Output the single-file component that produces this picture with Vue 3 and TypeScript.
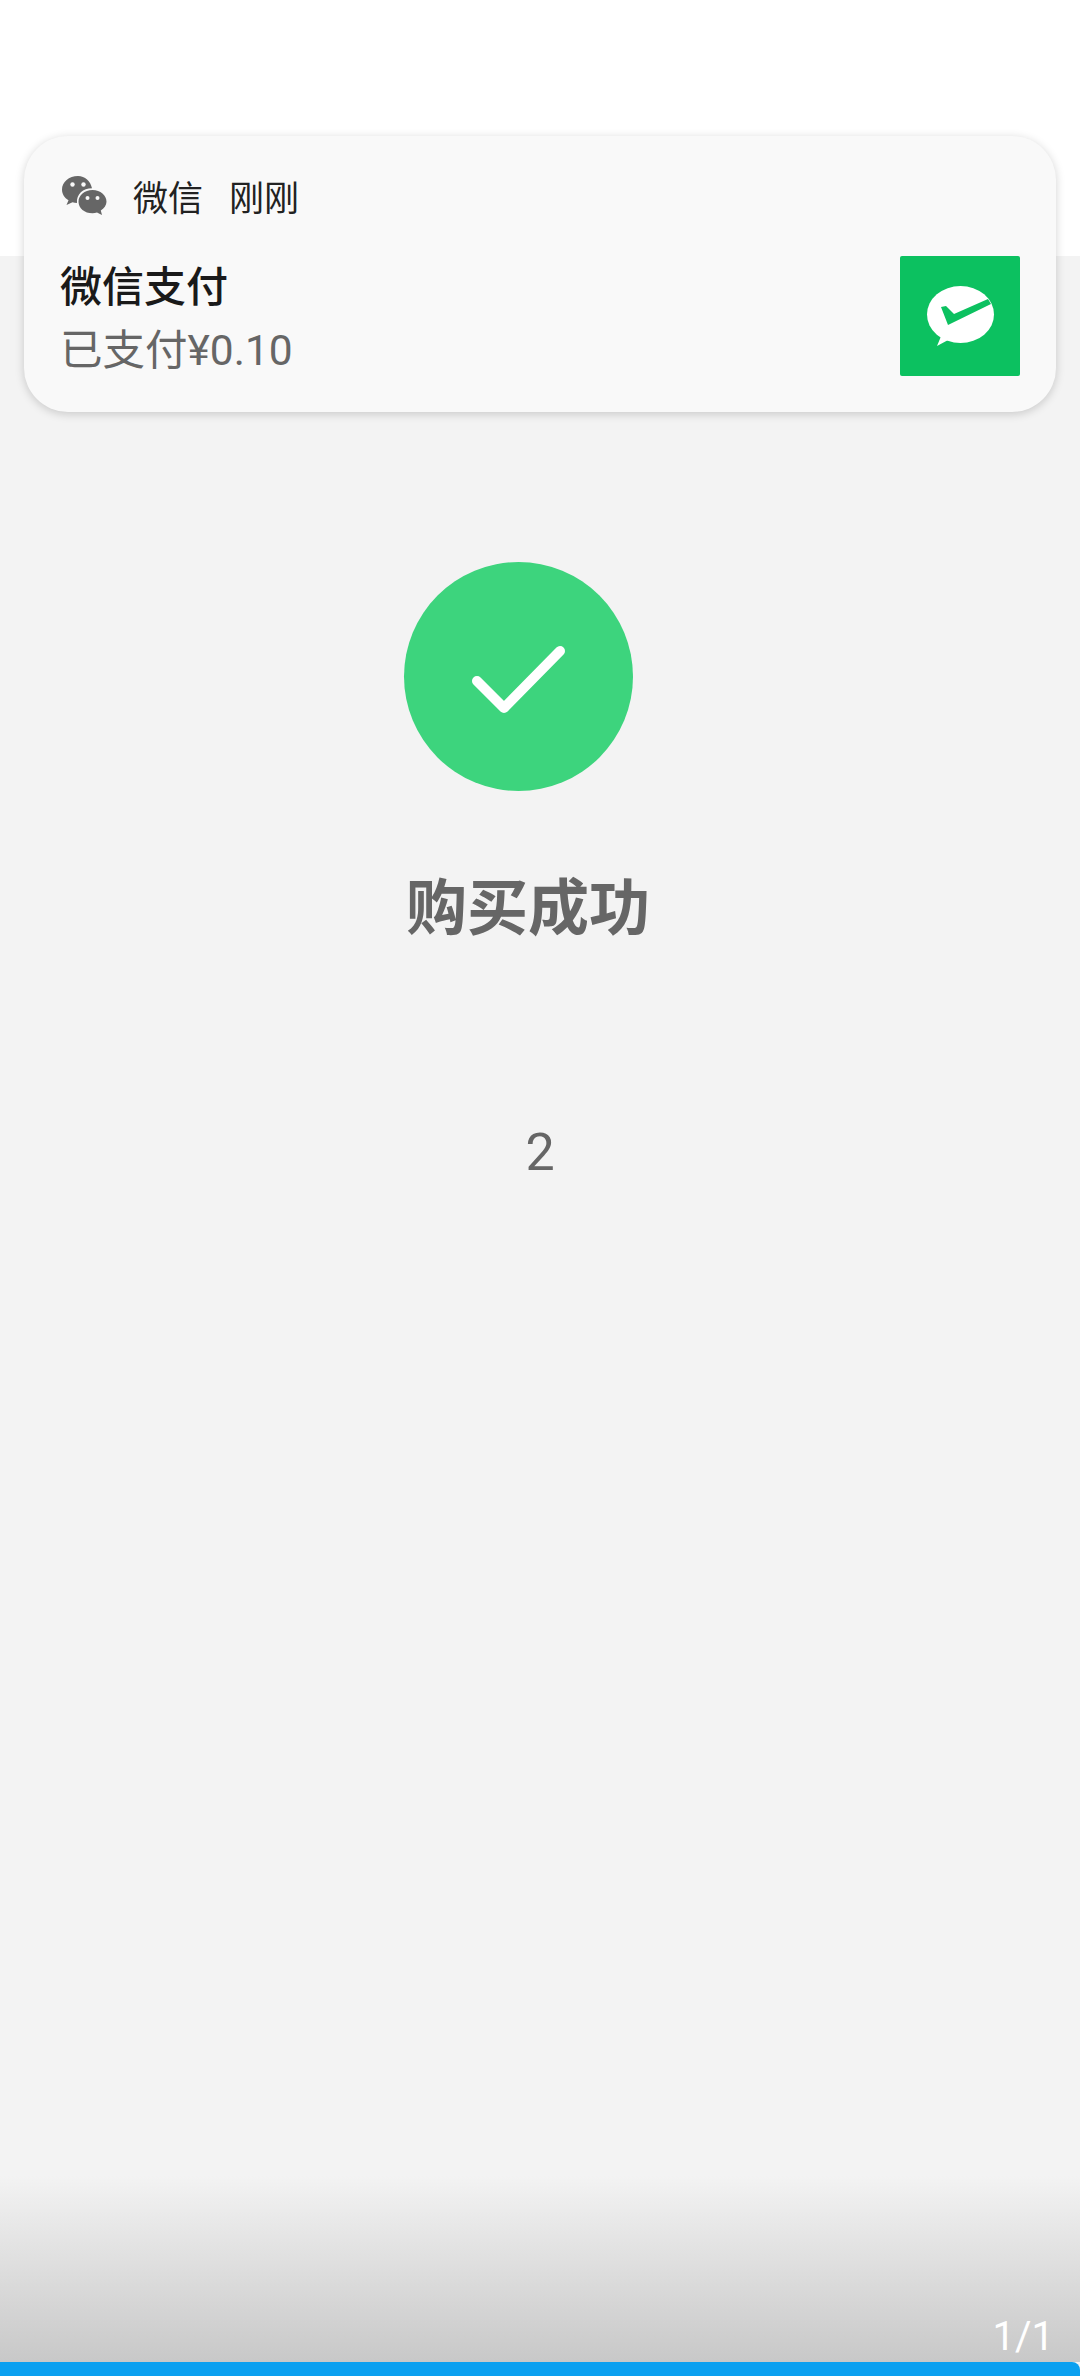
<template>
  <div class="page">
    <div class="status-area"></div>

    <main class="content">
      <div class="success-circle">
        <svg viewBox="0 0 229 229" width="229" height="229">
          <path d="M73 119 L100 146 L156 89" fill="none" stroke="#fff" stroke-width="10" stroke-linecap="round" stroke-linejoin="round" />
        </svg>
      </div>
      <div class="success-title">购买成功</div>
      <div class="countdown">{{ countdown }}</div>
    </main>

    <footer class="pager-shade">
      <span class="pager-text">1/1</span>
    </footer>
    <div class="progress-bar"></div>

    <div class="notification">
      <div class="notif-head">
        <svg class="app-icon" viewBox="0 0 46 40" width="46" height="40">
          <path d="M17 1C8 1 1 7 1 14.500C1 19 3.500 22.800 7.500 25.200L5.500 30L11.500 27.300C13 27.800 14.500 28 16 28.100C15.300 19 22 13.500 31 13.300C29.500 6 24 1 17 1Z" fill="#666" />
          <path d="M31.500 15C23.500 15 17.500 20.300 17.500 26.700C17.500 33 23.500 38.300 31.500 38.300C33 38.300 34.500 38 36 37.600L41 40L39.800 35.500C43 33.300 45.500 30.200 45.500 26.700C45.500 20.300 39.500 15 31.500 15Z" fill="#666" />
          <circle cx="11.500" cy="9.500" r="2.200" fill="#f8f8f8" />
          <circle cx="22.500" cy="9.500" r="2.200" fill="#f8f8f8" />
          <circle cx="26.500" cy="23" r="2" fill="#f8f8f8" />
          <circle cx="36.500" cy="23" r="2" fill="#f8f8f8" />
        </svg>
        <span class="app-name">微信</span>
        <span class="notif-time">刚刚</span>
      </div>
      <div class="notif-body">
        <div class="notif-text">
          <div class="notif-title">微信支付</div>
          <div class="notif-desc">已支付¥0.10</div>
        </div>
        <div class="pay-icon">
          <svg viewBox="0 0 120 120" width="120" height="120">
            <ellipse cx="60.500" cy="58.500" rx="33.500" ry="28.500" fill="#fff" />
            <path d="M42 78L37 90L50 83Z" fill="#fff" />
            <path d="M41 51L48 69L91 48L88 43L54 58L46 50Z" fill="#0cc160" />
          </svg>
        </div>
      </div>
    </div>
  </div>
</template>

<script setup lang="ts">
import { ref } from "vue";

const countdown = ref(2);
</script>

<style scoped>
.page {
  position: relative;
  width: 1080px;
  height: 2376px;
  display: flex;
  flex-direction: column;
  overflow: hidden;
  background: #f3f3f3;
  font-family: Roboto, "Noto Sans CJK SC", sans-serif;
}

.status-area {
  height: 256px;
  flex-shrink: 0;
  background: #fff;
}

.content {
  flex: 1;
  display: flex;
  flex-direction: column;
  align-items: center;
  padding-top: 306px;
}

.success-circle {
  width: 229px;
  height: 229px;
  margin-right: 44px;
  border-radius: 50%;
  background: #3dd47d;
}

.success-circle svg {
  display: block;
}

.success-title {
  margin-top: 78px;
  margin-right: 24px;
  font-size: 61px;
  line-height: 80px;
  font-weight: 700;
  color: #666;
}

.countdown {
  margin-top: 174px;
  font-size: 52px;
  line-height: 60px;
  color: #666;
}

.pager-shade {
  height: 186px;
  flex-shrink: 0;
  display: flex;
  align-items: flex-end;
  justify-content: flex-end;
  padding-right: 26px;
  box-sizing: border-box;
  background: linear-gradient(to bottom, #f3f3f3, #c8c8c8);
}

.pager-text {
  font-size: 40px;
  line-height: 50px;
  color: #fff;
}

.progress-bar {
  height: 14px;
  flex-shrink: 0;
  border-top-right-radius: 8px;
  background: #0ba0f0;
}

.notification {
  position: absolute;
  top: 136px;
  left: 24px;
  width: 1032px;
  height: 276px;
  box-sizing: border-box;
  padding: 37px 36px 36px;
  border-radius: 44px;
  background: #f9f9f9;
  box-shadow: 0 2px 10px rgba(0, 0, 0, 0.18);
}

.notif-head {
  display: flex;
  align-items: center;
  height: 44px;
  font-size: 35px;
  color: #222;
}

.app-icon {
  margin-left: 1px;
  flex-shrink: 0;
}

.app-name {
  margin-left: 26px;
}

.notif-time {
  margin-left: 26px;
}

.notif-body {
  display: flex;
  justify-content: space-between;
  margin-top: 39px;
}

.notif-text {
  padding-top: 7px;
}

.notif-title {
  font-size: 42px;
  line-height: 50px;
  font-weight: 500;
  color: #1a1a1a;
}

.notif-desc {
  margin-top: 13px;
  font-size: 42.5px;
  line-height: 50px;
  color: #666;
}

.pay-icon {
  width: 120px;
  height: 120px;
  border-radius: 2px;
  background: #0cc160;
}

.pay-icon svg {
  display: block;
}
</style>
